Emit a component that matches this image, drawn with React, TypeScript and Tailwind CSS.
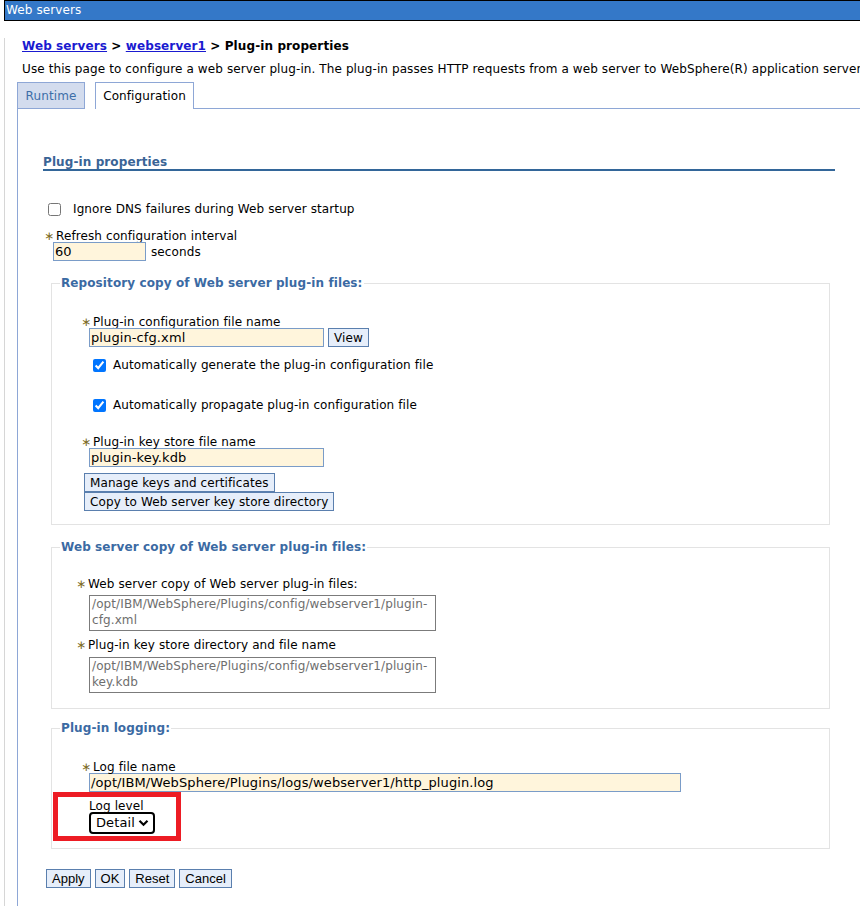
import React from 'react';

const Star = () => (
  <span className="inline-block w-[12px] text-[#7d6b1f] text-[12px]">∗</span>
);

const Label = ({ children, className = '' }: { children: React.ReactNode; className?: string }) => (
  <div className={`h-[15px] leading-[18px] ${className}`}>{children}</div>
);

const TextInput = ({ value, w }: { value: string; w: string }) => (
  <div className={`${w} h-[19px] border border-[#7a9cc8] bg-[#fff5dc] px-[1px] leading-[17px] text-[13px] text-black`}>
    {value}
  </div>
);

const Btn = ({ label, mono }: { label: string; mono?: boolean }) => (
  <button
    className={`h-[19px] border border-[#5a7fae] bg-[#e6eefa] px-[5px] leading-[16px] text-black ${
      mono ? 'font-["Liberation_Sans",sans-serif] text-[13px] tracking-normal' : 'text-[12px]'
    }`}
  >
    {label}
  </button>
);

const Legend = ({ children }: { children: React.ReactNode }) => (
  <legend className="ml-[8px] px-[1px] text-[12px] font-bold leading-[16px] text-[#3b6aa3]">{children}</legend>
);

const ReadBox = ({ value }: { value: string }) => (
  <div className="w-[347px] h-[36px] border border-[#7b7b7b] px-[2px] text-[12px] leading-[16px] text-[#6e6e6e] whitespace-normal">
    {value}
  </div>
);

export default function App() {
  return (
    <div className='w-[860px] h-[906px] overflow-hidden bg-white whitespace-nowrap font-["DejaVu_Sans",sans-serif] text-[12px] tracking-[0.1px] text-black'>
      <div className="ml-[4px] h-[21px] border-t border-l border-b border-black bg-[#3478c8] pl-[1px] text-[12px] leading-[19px] text-white">
        Web servers
      </div>

      <div className="ml-[4px] border-l border-[#d6d6d6] pl-[12px]">
        <div className="ml-[5px] mt-[17px] text-[12px] font-bold leading-[16px]">
          <a className="text-[#1a1ad0] underline">Web servers</a> &gt;{' '}
          <a className="text-[#1a1ad0] underline">webserver1</a> &gt; Plug-in properties
        </div>
        <div className="ml-[5px] mt-[7px] leading-[16px]">
          Use this page to configure a web server plug-in. The plug-in passes HTTP requests from a web server to
          WebSphere(R) application servers.
        </div>

        <div className="mt-[5px] flex h-[27px] items-stretch">
          <div className="w-[68px] border border-[#8ea7d6] bg-[#d3dcee] text-center leading-[26px] text-[#3d6ea8]">
            Runtime
          </div>
          <div className="w-[10px]" />
          <div className="w-[99px] border border-b-0 border-[#8ea7d6] bg-white text-center leading-[26px]">
            Configuration
          </div>
          <div className="flex-1 border-b border-[#8ea7d6]" />
        </div>

        <div className="h-[800px] border-l border-[#8ea7d6] pl-[25px] pr-[25px]">
          <div className="pt-[44px]">
            <div className="border-b-2 border-[#336699] text-[12px] font-bold text-[#3a6496]">
              <div className="h-[16px] leading-[18px]">Plug-in properties</div>
            </div>
          </div>

          <label className="ml-[5px] mt-[30px] flex h-[16px] items-center">
            <input type="checkbox" className="h-[13px] w-[13px]" />
            <span className="ml-[12px]">Ignore DNS failures during Web server startup</span>
          </label>

          <Label className="ml-[1px] mt-[10px]">
            <Star />
            Refresh configuration interval
          </Label>
          <div className="ml-[10px] flex items-center">
            <TextInput value="60" w="w-[93px]" />
            <span className="ml-[5px]">seconds</span>
          </div>

          <fieldset className="ml-[8px] mr-[5px] mt-[14px] border border-[#e3e3e3] pb-[13px]">
            <Legend>Repository copy of Web server plug-in files:</Legend>
            <Label className="ml-[29px] mt-[22px]">
              <Star />
              Plug-in configuration file name
            </Label>
            <div className="ml-[37px] flex">
              <TextInput value="plugin-cfg.xml" w="w-[235px]" />
              <div className="ml-[4px]">
                <Btn label="View" />
              </div>
            </div>
            <label className="ml-[41px] mt-[10px] flex h-[16px] items-center">
              <input type="checkbox" defaultChecked className="h-[13px] w-[13px]" />
              <span className="ml-[7px]">Automatically generate the plug-in configuration file</span>
            </label>
            <label className="ml-[41px] mt-[24px] flex h-[16px] items-center">
              <input type="checkbox" defaultChecked className="h-[13px] w-[13px]" />
              <span className="ml-[7px]">Automatically propagate plug-in configuration file</span>
            </label>
            <Label className="ml-[29px] mt-[20px]">
              <Star />
              Plug-in key store file name
            </Label>
            <div className="ml-[37px]">
              <TextInput value="plugin-key.kdb" w="w-[235px]" />
            </div>
            <div className="ml-[32px] mt-[6px] flex flex-col items-start">
              <Btn label="Manage keys and certificates" />
              <Btn label="Copy to Web server key store directory" />
            </div>
          </fieldset>

          <fieldset className="ml-[8px] mr-[5px] mt-[14px] border border-[#e3e3e3] pb-[15px]">
            <Legend>Web server copy of Web server plug-in files:</Legend>
            <Label className="ml-[24px] mt-[20px]">
              <Star />
              Web server copy of Web server plug-in files:
            </Label>
            <div className="ml-[37px] mt-[5px]">
              <ReadBox value="/opt/IBM/WebSphere/Plugins/config/webserver1/plugin-cfg.xml" />
            </div>
            <Label className="ml-[24px] mt-[5px]">
              <Star />
              Plug-in key store directory and file name
            </Label>
            <div className="ml-[37px] mt-[6px]">
              <ReadBox value="/opt/IBM/WebSphere/Plugins/config/webserver1/plugin-key.kdb" />
            </div>
          </fieldset>

          <fieldset className="ml-[8px] mr-[5px] mt-[11px] border border-[#e3e3e3] pb-[7px]">
            <Legend>Plug-in logging:</Legend>
            <Label className="ml-[29px] mt-[22px]">
              <Star />
              Log file name
            </Label>
            <div className="ml-[37px]">
              <TextInput value="/opt/IBM/WebSphere/Plugins/logs/webserver1/http_plugin.log" w="w-[592px]" />
            </div>
            <div className="ml-[1px] h-[49px] w-[128px] border-[5px] border-[#ed1c24] pl-[31px]">
              <Label>Log level</Label>
              <div className="flex h-[22px] w-[66px] items-center justify-between rounded-[4px] border-2 border-black pl-[5px] pr-[4px] text-[13px]">
                <span>Detail</span>
                <svg width="11" height="8" viewBox="0 0 11 8">
                  <path d="M1.5 1.8 L5.5 5.8 L9.5 1.8" fill="none" stroke="black" strokeWidth="2.2" />
                </svg>
              </div>
            </div>
          </fieldset>

          <div className="ml-[3px] mt-[20px] flex gap-[4px]">
            <Btn label="Apply" mono />
            <Btn label="OK" mono />
            <Btn label="Reset" mono />
            <Btn label="Cancel" mono />
          </div>
        </div>
      </div>
    </div>
  );
}
